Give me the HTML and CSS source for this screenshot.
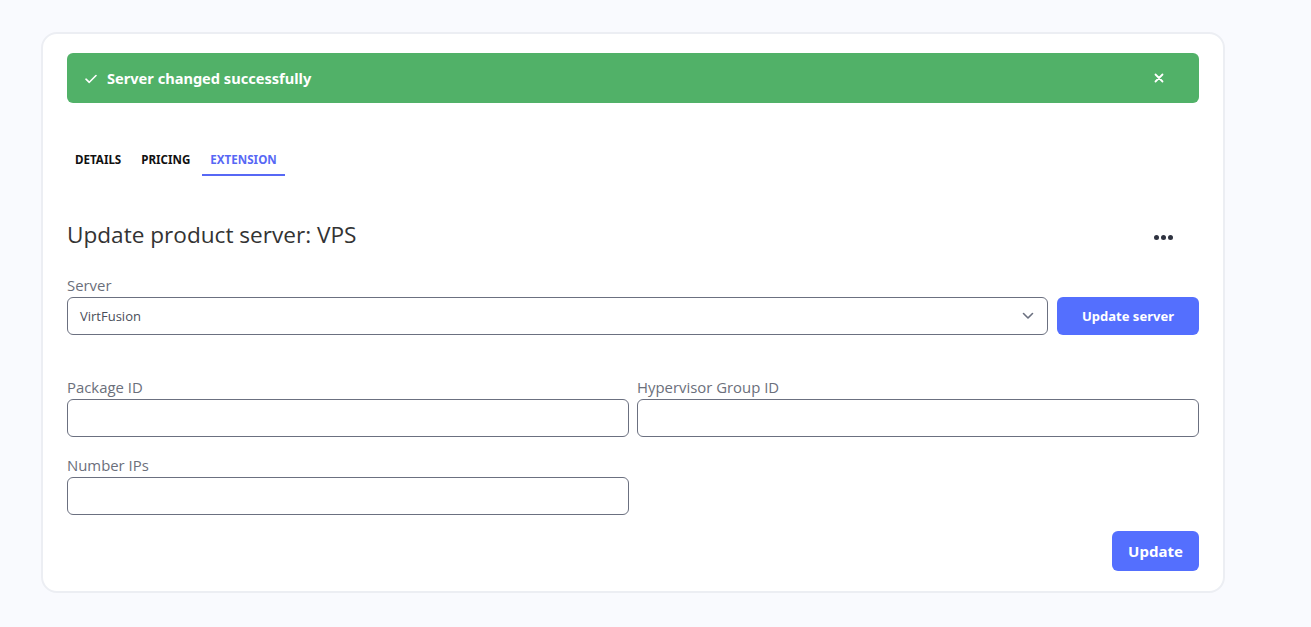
FILE: index.html
```html
<!DOCTYPE html>
<html lang="en">
<head>
<meta charset="utf-8">
<title>Update product server</title>
<link rel="stylesheet" href="styles.css">
</head>
<body>
<div class="card">
  <div class="alert">
    <div class="alert-msg">
      <svg class="check" width="12" height="10" viewBox="0 0 12 10"><path d="M1 5.2 L4.3 8.3 L11 1.5" fill="none" stroke="#fff" stroke-width="1.6" stroke-linecap="round" stroke-linejoin="round"/></svg>
      <span>Server changed successfully</span>
    </div>
    <svg class="close" width="10" height="10" viewBox="0 0 10 10"><path d="M1.5 1.5 L8.5 8.5 M8.5 1.5 L1.5 8.5" stroke="#fff" stroke-width="1.8" stroke-linecap="round"/></svg>
  </div>

  <nav class="tabs">
    <a class="tab">DETAILS</a>
    <a class="tab">PRICING</a>
    <a class="tab active">EXTENSION</a>
  </nav>

  <div class="head">
    <h1>Update product server: VPS</h1>
    <div class="dots"><i></i><i></i><i></i></div>
  </div>

  <div class="field server-field">
    <label>Server</label>
    <div class="server-row">
      <div class="select">
        <span>VirtFusion</span>
        <svg width="12" height="8" viewBox="0 0 12 8"><path d="M1.5 1.5 L6 6 L10.5 1.5" fill="none" stroke="#6b7080" stroke-width="1.6" stroke-linecap="round" stroke-linejoin="round"/></svg>
      </div>
      <button class="btn btn-sm">Update server</button>
    </div>
  </div>

  <div class="grid">
    <div class="field">
      <label>Package ID</label>
      <div class="input"></div>
    </div>
    <div class="field">
      <label>Hypervisor Group ID</label>
      <div class="input"></div>
    </div>
    <div class="field">
      <label>Number IPs</label>
      <div class="input"></div>
    </div>
  </div>

  <div class="actions">
    <button class="btn btn-lg">Update</button>
  </div>
</div>
</body>
</html>
```
FILE: styles.css
```css
* { box-sizing: border-box; }
html, body { margin: 0; padding: 0; }
body {
  background: #f9fafe;
  font-family: "Open Sans", "Noto Sans", sans-serif;
  color: #333;
  padding: 32px 0 0 41px;
}
.card {
  width: 1184px;
  background: #fff;
  border: 2px solid #eceef3;
  border-radius: 16px;
  padding: 19px 24px 20px 24px;
}
.alert {
  height: 50px;
  background: #51b168;
  border-radius: 6px;
  display: flex;
  align-items: center;
  justify-content: space-between;
  padding: 0 35px 0 18px;
  color: #fff;
}
.alert-msg {
  display: flex;
  align-items: center;
  gap: 10px;
  font-family: "Noto Sans", "Open Sans", sans-serif;
  font-weight: 700;
  font-size: 14.6px;
}
.check { margin-top: 1px; }
.tabs {
  display: flex;
  margin-top: 39px;
  padding-left: 0;
}
.tab {
  font-family: "Noto Sans", "Open Sans", sans-serif;
  font-size: 11.6px;
  font-weight: 700;
  color: #111;
  padding: 10px 8px 7px 8px;
  border-bottom: 2px solid transparent;
  margin-right: 4px;
}
.tab.active {
  color: #5768f5;
  border-bottom-color: #5768f5;
}
.head {
  display: flex;
  justify-content: space-between;
  align-items: center;
  margin-top: 44px;
}
h1 {
  margin: 0;
  font-weight: 400;
  font-size: 22.6px;
  color: #333;
  line-height: 30px;
}
.dots {
  display: flex;
  gap: 2px;
  margin-right: 26px;
  margin-top: 4px;
}
.dots i {
  width: 5px; height: 5px;
  border-radius: 50%;
  background: #2f3340;
}
.field { display: flex; flex-direction: column; }
.field label {
  font-size: 14.9px;
  color: #6b6f7b;
  line-height: 20px;
  margin-bottom: 2px;
}
.server-field { margin-top: 25px; }
.server-row {
  display: flex;
  gap: 9px;
}
.select {
  flex: 1;
  height: 38px;
  border: 1px solid #6b7080;
  border-radius: 6px;
  display: flex;
  align-items: center;
  justify-content: space-between;
  padding: 0 13px 0 12px;
  font-size: 13px;
  color: #4a4e5a;
}
.btn {
  background: #546ffe;
  color: #fff;
  border: none;
  font-family: "Noto Sans", "Open Sans", sans-serif;
  font-weight: 700;
  border-radius: 6px;
  cursor: pointer;
}
.btn-sm {
  width: 142px;
  height: 38px;
  font-size: 13px;
}
.grid {
  display: grid;
  grid-template-columns: 1fr 1fr;
  column-gap: 8px;
  row-gap: 18px;
  margin-top: 42px;
}
.input {
  height: 38px;
  border: 1px solid #6b7080;
  border-radius: 6px;
}
.actions {
  display: flex;
  justify-content: flex-end;
  margin-top: 16px;
}
.btn-lg {
  width: 87px;
  height: 40px;
  font-size: 15px;
}
```
